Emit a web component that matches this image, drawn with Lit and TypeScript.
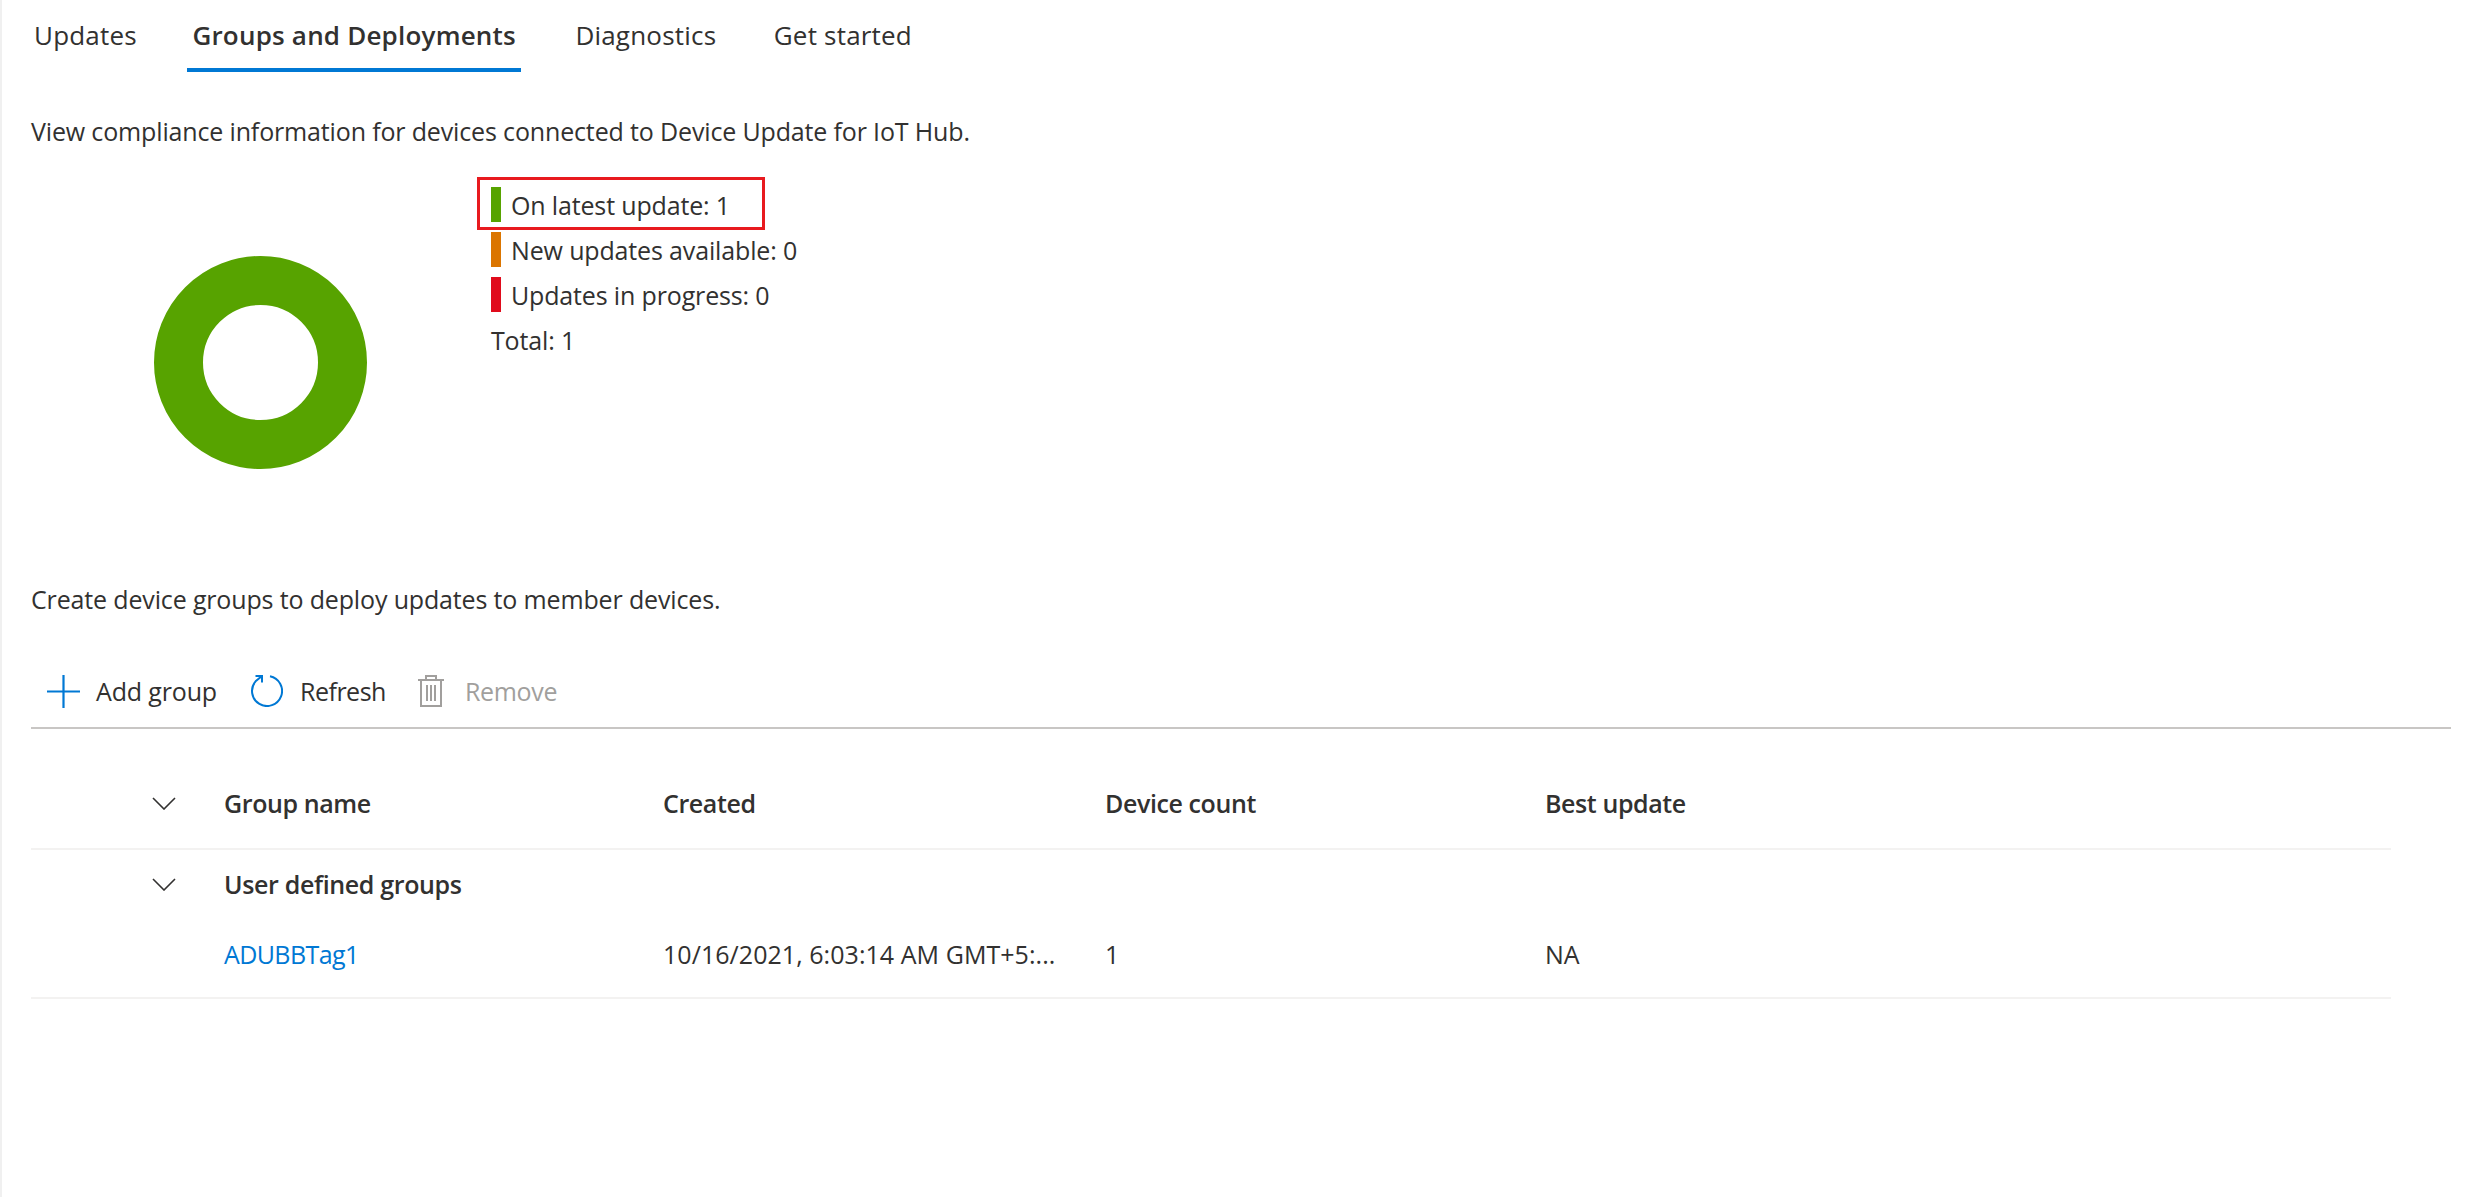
import { LitElement, html, css } from "lit";
import { customElement } from "lit/decorators.js";

@customElement("app-root")
export class AppRoot extends LitElement {
  static styles = css`
    :host {
      display: block;
      min-height: 1197px;
      box-sizing: border-box;
      background: #fff;
      border-left: 2px solid #f0f0f0;
      padding: 0 19px 0 29px;
      font-family: "Open Sans", "Noto Sans", sans-serif;
      font-size: 25px;
      letter-spacing: -0.15px;
      color: #323130;
    }
    .tabs { display: flex; height: 72px; margin-left: -2.5px; }
    .tab {
      box-sizing: border-box; height: 72px; padding: 2px 5.5px 0; margin-right: 46.5px;
      display: flex; align-items: center; border-bottom: 4px solid transparent;
      font-size: 26px; letter-spacing: 0.2px; white-space: nowrap;
    }
    .tab.first { margin-right: 44.5px; }
    .tab.active { font-weight: 600; border-bottom-color: #0078d4; margin-right: 48.5px; }
    .desc { line-height: 32px; margin-top: 43px; white-space: nowrap; }
    .desc.second { margin-top: 0; }
    .compliance { display: flex; height: 436px; padding-left: 123px; }
    .donut { width: 213px; height: 213px; margin-top: 109px; flex: none; }
    .legend { position: relative; margin: 40px 0 0 124px; display: flex; flex-direction: column; gap: 10px; }
    .legend-row { display: flex; align-items: center; height: 35px; gap: 10px; white-space: nowrap; }
    .swatch { width: 10px; height: 35px; flex: none; }
    .green { background: #57a300; }
    .orange { background: #db7500; }
    .red { background: #e00b1c; }
    .callout {
      position: absolute; left: -14px; top: -10px; width: 288px; height: 53px;
      box-sizing: border-box; border: 3px solid #e81a1f;
    }
    .toolbar {
      box-sizing: border-box;
      display: flex; align-items: center; height: 74px; margin-top: 40px;
      padding-left: 16px; border-bottom: 2px solid #c8c6c4;
    }
    .cmd { display: flex; align-items: center; white-space: nowrap; }
    .cmd svg { display: block; flex: none; }
    .add { width: 204px; gap: 16px; }
    .refresh { width: 167px; gap: 17px; letter-spacing: -0.5px; }
    .remove { gap: 21px; color: #a19f9d; letter-spacing: -0.35px; }
    .table { margin: 31px 60px 0 0; }
    .row {
      box-sizing: border-box;
      display: grid; grid-template-columns: 193px 439px 442px 440px 1fr;
      align-items: center; border-bottom: 2px solid #f3f2f1;
    }
    .head { height: 90px; padding-bottom: 2px; font-weight: 600; letter-spacing: -0.4px; }
    .group { height: 70px; padding-bottom: 2px; font-weight: 600; letter-spacing: -0.35px; border-bottom: none; }
    .item { height: 79px; padding-bottom: 10px; }
    .chev { padding-left: 121px; }
    .chev svg { display: block; }
    a { color: #0078d4; text-decoration: none; letter-spacing: -0.6px; }
    .date { white-space: nowrap; letter-spacing: 0.05px; }
    .nowrap { white-space: nowrap; }
  `;

  private chevron() {
    return html`<svg width="24" height="13" viewBox="0 0 24 13" fill="none" stroke="#323130" stroke-width="1.6"><path d="M1 1l11 11L23 1"/></svg>`;
  }

  render() {
    return html`
      <nav class="tabs">
        <div class="tab first">Updates</div>
        <div class="tab active">Groups and Deployments</div>
        <div class="tab">Diagnostics</div>
        <div class="tab">Get started</div>
      </nav>
      <div class="desc">View compliance information for devices connected to Device Update for IoT Hub.</div>
      <section class="compliance">
        <svg class="donut" viewBox="0 0 213 213"><circle cx="106.5" cy="106.5" r="82" fill="none" stroke="#57a300" stroke-width="49"/></svg>
        <div class="legend">
          <div class="legend-row"><span class="swatch green"></span>On latest update: 1</div>
          <div class="legend-row"><span class="swatch orange"></span>New updates available: 0</div>
          <div class="legend-row"><span class="swatch red"></span>Updates in progress: 0</div>
          <div class="legend-row">Total: 1</div>
          <div class="callout"></div>
        </div>
      </section>
      <div class="desc second">Create device groups to deploy updates to member devices.</div>
      <div class="toolbar">
        <div class="cmd add">
          <svg width="33" height="33" viewBox="0 0 33 33" fill="none" stroke="#0078d4" stroke-width="2.2"><path d="M0 16.5h33M16.5 0v33"/></svg>
          Add group
        </div>
        <div class="cmd refresh">
          <svg width="32" height="32" viewBox="0 0 32 32" fill="none" stroke="#0078d4" stroke-width="2"><path d="M19 1.3A15 15 0 1 1 4.6 6.3L11 1"/><path d="M4.5 1H11V7.5"/></svg>
          Refresh
        </div>
        <div class="cmd remove">
          <svg width="26" height="32" viewBox="0 0 26 32" fill="none" stroke="#a19f9d" stroke-width="2"><path d="M0 5h26M3 5v26h20V5M8 5V1h10v4M9 10v16M13 10v16M17 10v16"/></svg>
          Remove
        </div>
      </div>
      <div class="table">
        <div class="row head">
          <div class="chev">${this.chevron()}</div>
          <div>Group name</div><div>Created</div><div>Device count</div><div>Best update</div>
        </div>
        <div class="row group">
          <div class="chev">${this.chevron()}</div>
          <div class="nowrap">User defined groups</div>
        </div>
        <div class="row item">
          <div></div>
          <div><a href="#">ADUBBTag1</a></div>
          <div class="date">10/16/2021, 6:03:14 AM GMT+5:...</div>
          <div>1</div><div>NA</div>
        </div>
      </div>
    `;
  }
}
